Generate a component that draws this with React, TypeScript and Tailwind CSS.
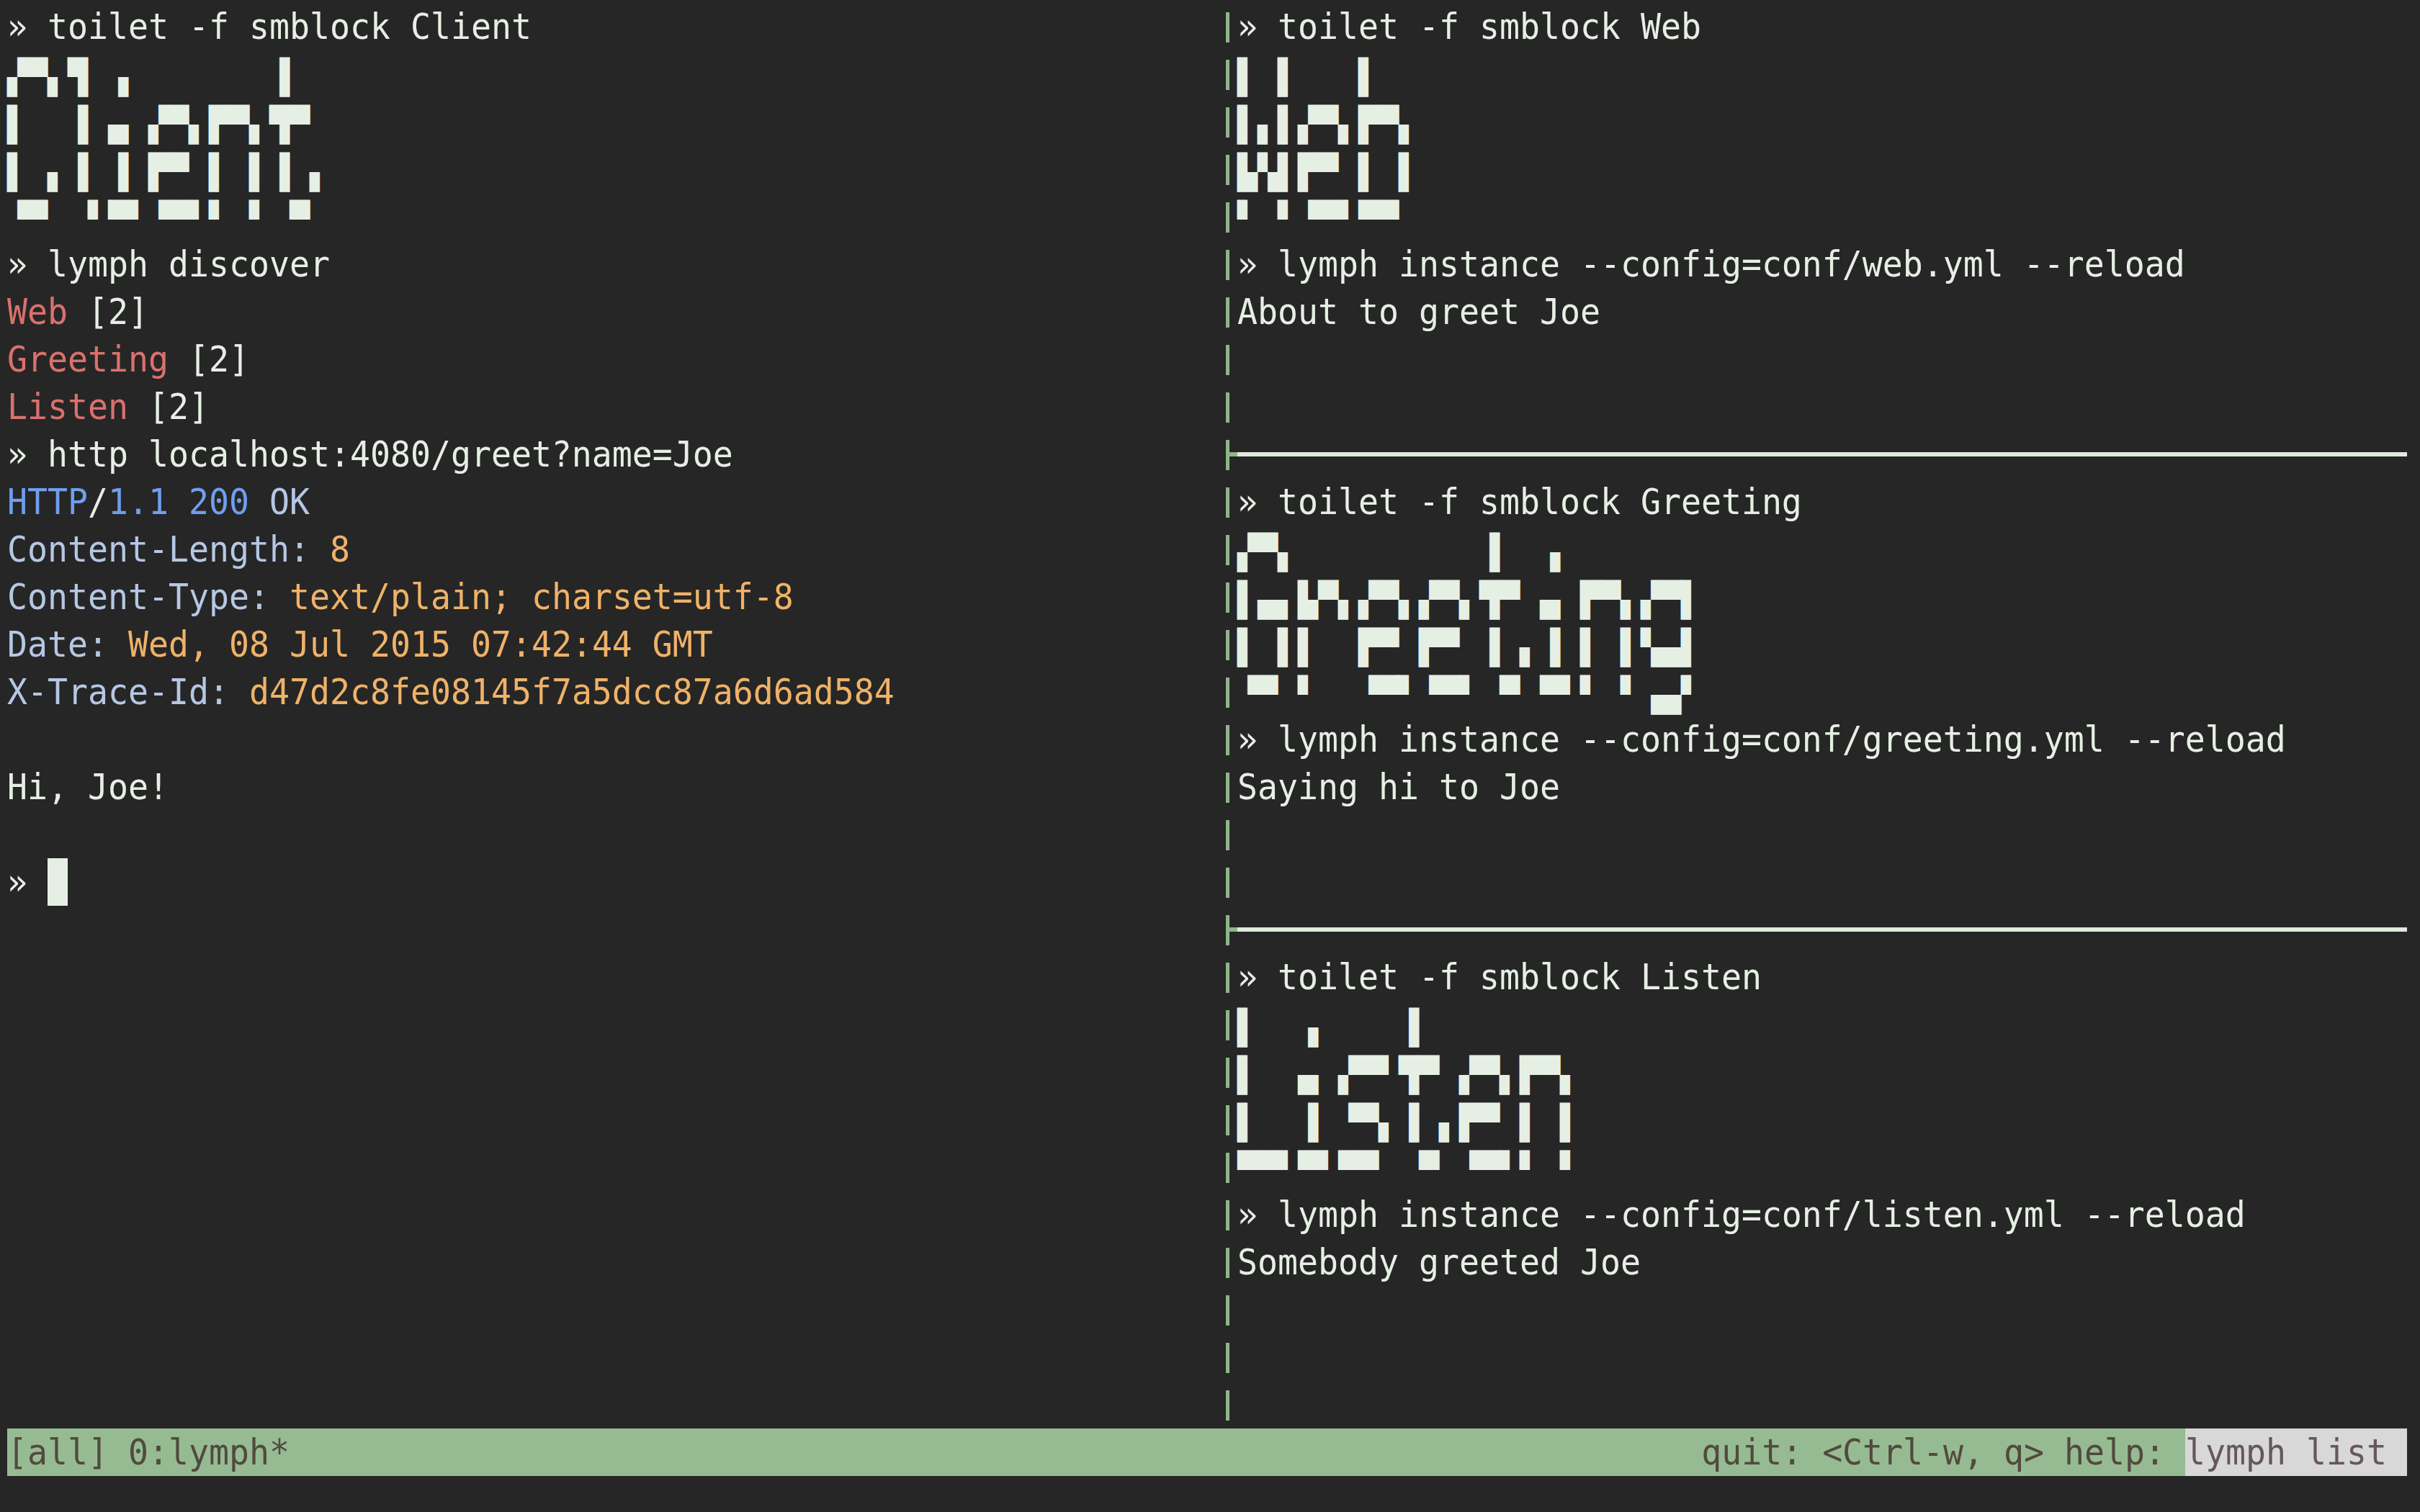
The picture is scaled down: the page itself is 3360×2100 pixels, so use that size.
import type { ReactNode } from "react";

const red = "text-[#d9716d]";
const blue = "text-[#6f9fee]";
const pale = "text-[#b5c7e4]";
const orange = "text-[#efb268]";

// the terminal font runs a bit taller than DejaVu, stretch from the baseline
const tall = "origin-[0_50px] scale-y-[1.08] leading-[68px]";

function Row({ children }: { children?: ReactNode }) {
  return <div className={`h-[66px] whitespace-pre ${tall}`}>{children}</div>;
}

function Art({ lines }: { lines: string[] }) {
  return (
    <>
      {lines.map((line, idx) => (
        <div key={idx} className="h-[66px] whitespace-pre leading-[74px]">
          {line}
        </div>
      ))}
    </>
  );
}

function Divider() {
  return (
    <div className="flex h-[66px] items-center">
      <div className="h-[6px] w-full bg-[#e0eadd]" />
    </div>
  );
}

const dividerRows = [9, 19];

function Separator() {
  return (
    <div className="w-[28px] shrink-0">
      {Array.from({ length: 30 }).map((_, idx) => (
        <div key={idx} className="flex h-[66px] items-center pl-[12px]">
          <div className="mt-[2px] h-[42px] w-[5px] shrink-0 bg-[#8fb58a]" />
          {dividerRows.includes(idx) && <div className="h-[6px] flex-1 bg-[#8fb58a]" />}
        </div>
      ))}
    </div>
  );
}

const client = [
  "▞▀▖▜ ▗       ▐  ",
  "▌  ▐ ▄ ▞▀▖▛▀▖▜▀ ",
  "▌ ▖▐ ▐ ▛▀ ▌ ▌▐ ▖",
  "▝▀  ▘▀▘▝▀▘▘ ▘ ▀ ",
];

const web = [
  "▌ ▌   ▌  ",
  "▌▖▌▞▀▖▛▀▖",
  "▙▚▌▛▀ ▌ ▌",
  "▘ ▘▝▀▘▀▀ ",
];

const greeting = [
  "▞▀▖         ▐  ▗",
  "▌▄▖▙▀▖▞▀▖▞▀▖▜▀ ▄ ▛▀▖▞▀▌",
  "▌ ▌▌  ▛▀ ▛▀ ▐ ▖▐ ▌ ▌▚▄▌",
  "▝▀ ▘  ▝▀▘▝▀▘ ▀ ▀▘▘ ▘▗▄▘",
];

const listen = [
  "▌  ▗    ▐",
  "▌  ▄ ▞▀▘▜▀ ▞▀▖▛▀▖",
  "▌  ▐ ▝▀▖▐ ▖▛▀ ▌ ▌",
  "▀▀▘▀▘▀▀  ▀ ▝▀▘▘ ▘",
];

export default function App() {
  return (
    <div className="h-[2100px] w-[3360px] overflow-hidden bg-[#262626] pl-[10px] pt-[4px] font-['DejaVu_Sans_Mono',monospace] text-[46.5px] text-[#e6efe4]">
      <div className="flex">
        <div className="w-[1680px] shrink-0">
          <Row>» toilet -f smblock Client</Row>
          <Art lines={client} />
          <Row>» lymph discover</Row>
          <Row>
            <span className={red}>Web</span> [2]
          </Row>
          <Row>
            <span className={red}>Greeting</span> [2]
          </Row>
          <Row>
            <span className={red}>Listen</span> [2]
          </Row>
          <Row>» http localhost:4080/greet?name=Joe</Row>
          <Row>
            <span className={blue}>HTTP</span>/<span className={blue}>1.1 200</span>{" "}
            <span className={pale}>OK</span>
          </Row>
          <Row>
            <span className={pale}>Content-Length:</span> <span className={orange}>8</span>
          </Row>
          <Row>
            <span className={pale}>Content-Type:</span>{" "}
            <span className={orange}>text/plain; charset=utf-8</span>
          </Row>
          <Row>
            <span className={pale}>Date:</span>{" "}
            <span className={orange}>Wed, 08 Jul 2015 07:42:44 GMT</span>
          </Row>
          <Row>
            <span className={pale}>X-Trace-Id:</span>{" "}
            <span className={orange}>d47d2c8fe08145f7a5dcc87a6d6ad584</span>
          </Row>
          <Row />
          <Row>Hi, Joe!</Row>
          <Row />
          <div className="flex h-[66px] whitespace-pre">
            <span className={`inline-block ${tall}`}>{"» "}</span>
            <span className="h-[66px] w-[28px] bg-[#e6efe4]" />
          </div>
        </div>

        <Separator />

        <div className="w-[1624px] shrink-0">
          <Row>» toilet -f smblock Web</Row>
          <Art lines={web} />
          <Row>» lymph instance --config=conf/web.yml --reload</Row>
          <Row>About to greet Joe</Row>
          <Row />
          <Row />
          <Divider />
          <Row>» toilet -f smblock Greeting</Row>
          <Art lines={greeting} />
          <Row>» lymph instance --config=conf/greeting.yml --reload</Row>
          <Row>Saying hi to Joe</Row>
          <Row />
          <Row />
          <Divider />
          <Row>» toilet -f smblock Listen</Row>
          <Art lines={listen} />
          <Row>» lymph instance --config=conf/listen.yml --reload</Row>
          <Row>Somebody greeted Joe</Row>
        </div>
      </div>

      <div className="flex h-[66px] w-[3332px] justify-between whitespace-pre bg-[#96bb93] text-[#524a3e]">
        <span className={`inline-block h-[66px] ${tall}`}>[all] 0:lymph*</span>
        <div className="flex">
          <span className={`inline-block h-[66px] ${tall}`}>{"quit: <Ctrl-w, q> help: "}</span>
          <div className="bg-[#d8d8d8] text-[#66575a]">
            <span className={`inline-block h-[66px] ${tall}`}>{"lymph list "}</span>
          </div>
        </div>
      </div>
    </div>
  );
}
